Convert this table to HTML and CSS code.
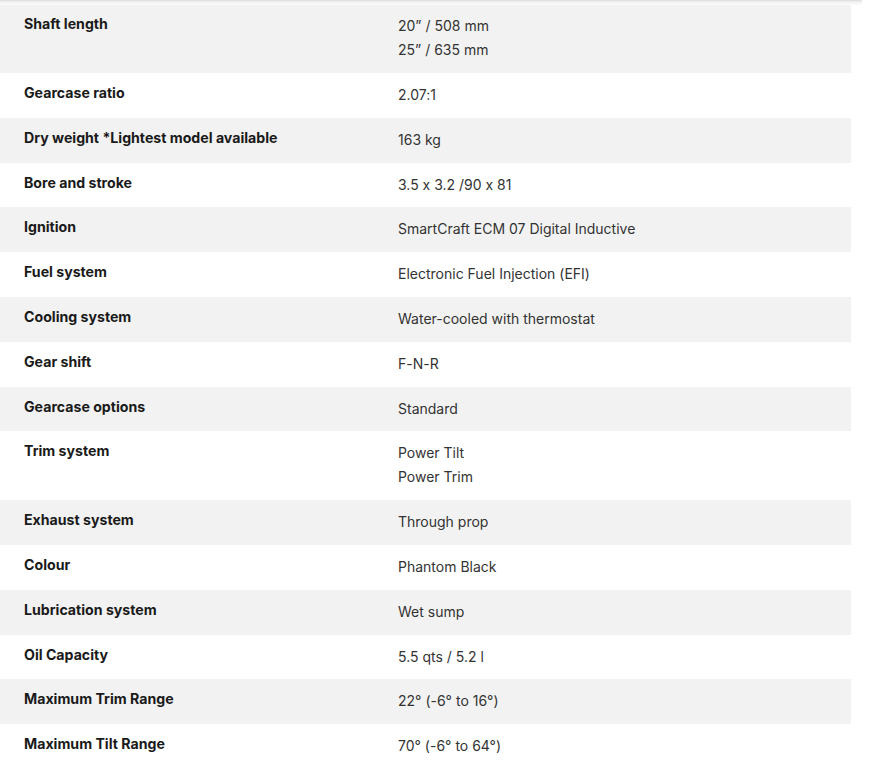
FILE: index.html
```html
<!DOCTYPE html>
<html>
<head>
<meta charset="utf-8">
<link rel="stylesheet" href="styles.css">
</head>
<body>
<div class="topshade"></div>
<div class="specs">
  <div class="row"><div class="label">Shaft length</div><div class="value"><div>20” / 508 mm</div><div>25” / 635 mm</div></div></div>
  <div class="row"><div class="label">Gearcase ratio</div><div class="value"><div>2.07:1</div></div></div>
  <div class="row"><div class="label">Dry weight *Lightest model available</div><div class="value"><div>163 kg</div></div></div>
  <div class="row"><div class="label">Bore and stroke</div><div class="value"><div>3.5 x 3.2 /90 x 81</div></div></div>
  <div class="row"><div class="label">Ignition</div><div class="value"><div>SmartCraft ECM 07 Digital Inductive</div></div></div>
  <div class="row"><div class="label">Fuel system</div><div class="value"><div>Electronic Fuel Injection (EFI)</div></div></div>
  <div class="row"><div class="label">Cooling system</div><div class="value"><div>Water-cooled with thermostat</div></div></div>
  <div class="row"><div class="label">Gear shift</div><div class="value"><div>F-N-R</div></div></div>
  <div class="row"><div class="label">Gearcase options</div><div class="value"><div>Standard</div></div></div>
  <div class="row"><div class="label">Trim system</div><div class="value"><div>Power Tilt</div><div>Power Trim</div></div></div>
  <div class="row"><div class="label">Exhaust system</div><div class="value"><div>Through prop</div></div></div>
  <div class="row"><div class="label">Colour</div><div class="value"><div>Phantom Black</div></div></div>
  <div class="row"><div class="label">Lubrication system</div><div class="value"><div>Wet sump</div></div></div>
  <div class="row"><div class="label">Oil Capacity</div><div class="value"><div>5.5 qts / 5.2 l</div></div></div>
  <div class="row"><div class="label">Maximum Trim Range</div><div class="value"><div>22° (-6° to 16°)</div></div></div>
  <div class="row"><div class="label">Maximum Tilt Range</div><div class="value"><div>70° (-6° to 64°)</div></div></div>
</div>
</body>
</html>
```

FILE: styles.css
```css
html, body {
  margin: 0;
  padding: 0;
  background: #fff;
}
body {
  font-family: Inter, "Noto Sans", sans-serif;
  font-size: 14px;
  color: #333;
  font-feature-settings: "calt" 0;
}
.topshade {
  width: 862px;
  height: 5px;
  background: linear-gradient(#d9d9d9, #f2f2f2 40%, #fbfbfb);
}
.specs {
  width: 851px;
}
.row {
  display: grid;
  grid-template-columns: 374px 1fr;
  align-items: start;
  padding: 10px 0 10.8px;
}
.row:nth-child(odd) {
  background: #f2f2f2;
}
.label {
  padding-left: 24px;
  font-weight: 700;
  font-size: 14.15px;
  color: #1a1a1a;
  line-height: 20px;
}
.value {
  padding-left: 24px;
  line-height: 24px;
  color: #333;
}
.row:first-child {
  padding-top: 9.3px;
}
```
